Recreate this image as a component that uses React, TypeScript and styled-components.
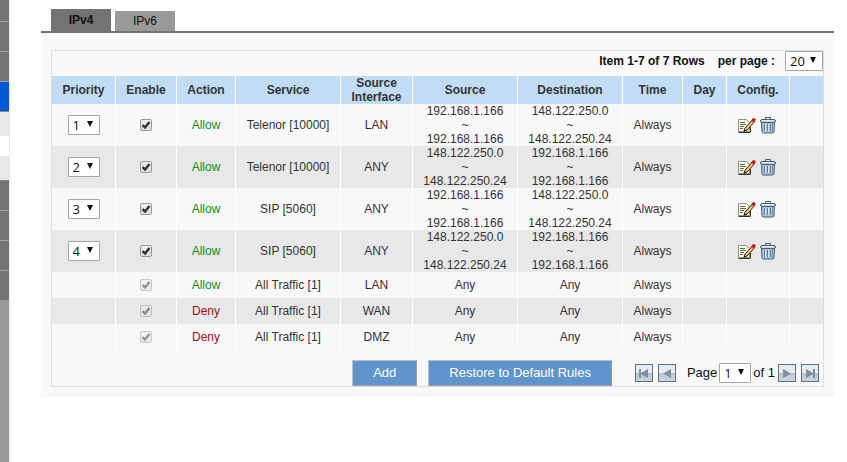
import React from "react";
import styled, { createGlobalStyle } from "styled-components";

const Global = createGlobalStyle`
  *, *::before, *::after { box-sizing: border-box; }
  body {
    margin: 0;
    background: #fff;
    color: #333;
    font: 12px/14px "Liberation Sans", Arial, sans-serif;
  }
`;

const Page = styled.div`
  display: flex;
  min-height: 100vh;
`;

const Sidebar = styled.nav`
  flex: none;
  display: flex;
  flex-direction: column;
  width: 10px;
  border-right: 1px solid #e8e8e8;
  background: #999;
`;

const SideItem = styled.div<{ $h: number; $tone: string; $line?: string }>`
  flex: none;
  height: ${(p) => p.$h}px;
  background: ${(p) => p.$tone};
  border-bottom: ${(p) => (p.$line ? `1px solid ${p.$line}` : "0")};
`;

const Main = styled.main`
  flex: 1;
  min-width: 0;
  padding: 9px 13px 0 31px;
`;

const Tabs = styled.div`
  display: flex;
  align-items: flex-end;
  gap: 4px;
  padding-left: 10px;
  border-bottom: 2px solid #737373;
`;

const Tab = styled.button<{ $active?: boolean }>`
  width: 60px;
  height: ${(p) => (p.$active ? 22 : 20)}px;
  padding: 0;
  border: 0;
  background: ${(p) => (p.$active ? "#737373" : "#999")};
  color: #111;
  font: inherit;
  font-weight: ${(p) => (p.$active ? 700 : 400)};
`;

const Panel = styled.section`
  padding: 17px 10px 10px;
  background: #f8f8f8;
`;

const Box = styled.div`
  border: 1px solid #ddd;
`;

const TopBar = styled.div`
  display: flex;
  justify-content: flex-end;
  gap: 13px;
  height: 25px;
  color: #111;
  font-weight: 700;
  line-height: 20px;
`;

const PerPage = styled.label`
  display: flex;
  gap: 10px;
`;

const Table = styled.table`
  width: 100%;
  table-layout: fixed;
  border-collapse: separate;
  border-spacing: 0;
  text-align: center;
`;

const Col = styled.col<{ $w: number }>`
  width: ${(p) => p.$w}px;
`;

const Th = styled.th`
  height: 28px;
  padding: 0;
  border-right: 1px solid #fff;
  background: #c2dcf5;
  &:last-child { border-right: 0; }
`;

const Td = styled.td`
  padding: 0;
  border-right: 1px solid #fff;
  vertical-align: middle;
  &:last-child { border-right: 0; }
`;

const Row = styled.tr<{ $tall: boolean }>`
  height: ${(p) => (p.$tall ? 42 : 26)}px;
  &:nth-child(even) { background: #e8e8e8; }
`;

const Verdict = styled.span<{ $deny: boolean }>`
  color: ${(p) => (p.$deny ? "#a01010" : "#0a8f1c")};
`;

const SelectWrap = styled.span<{ $w: number; $h: number }>`
  position: relative;
  display: inline-block;
  vertical-align: middle;
  width: ${(p) => p.$w}px;
  height: ${(p) => p.$h}px;
  svg {
    position: absolute;
    right: 7px;
    top: 6px;
    pointer-events: none;
  }
`;

const SelectBox = styled.select`
  display: block;
  appearance: none;
  width: 100%;
  height: 100%;
  padding: 0 0 0 4px;
  border: 1px solid #a6a6a6;
  border-radius: 1px;
  background: #fff;
  color: #111;
  font: 13px/16px "Open Sans", "Noto Sans", sans-serif;
`;

const CheckWrap = styled.span<{ $off: boolean }>`
  position: relative;
  display: block;
  width: 12px;
  height: 12px;
  margin: 0 auto;
  opacity: ${(p) => (p.$off ? 0.5 : 1)};
  svg {
    position: absolute;
    left: 1px;
    top: 1px;
    pointer-events: none;
  }
`;

const CheckBox = styled.input`
  display: block;
  appearance: none;
  width: 12px;
  height: 12px;
  margin: 0;
  border: 1px solid #999;
  border-radius: 2px;
  background: linear-gradient(#eee, #ddd);
`;

const Tools = styled.div`
  display: flex;
  justify-content: center;
  gap: 4px;
  padding-right: 2px;
`;

const IconButton = styled.button`
  display: block;
  padding: 0;
  border: 0;
  background: none;
  svg { display: block; }
`;

const Footer = styled.div`
  display: flex;
  justify-content: flex-end;
  flex-wrap: wrap;
  gap: 23px;
  padding: 10px 4px 0 0;
`;

const Actions = styled.div`
  display: flex;
  gap: 11px;
`;

const Action = styled.button`
  height: 26px;
  padding: 0 20px;
  border: 1px solid;
  border-color: #b5c1ce #a09a94 #a09a94 #b5c1ce;
  background: #6094cc;
  color: #fff;
  font: 13px/16px "Liberation Sans", Arial, sans-serif;
`;

const Pager = styled.div`
  display: flex;
  align-items: center;
  color: #111;
  font-size: 13px;
`;

const NavGroup = styled.div`
  display: flex;
  gap: 5px;
`;

const PageLabel = styled.label`
  display: flex;
  align-items: center;
  gap: 2px;
  padding: 0 3px 0 11px;
`;

const NavButton = styled.button`
  width: 18px;
  height: 18px;
  padding: 0;
  border: 1px solid #62717c;
  background: linear-gradient(#e6ecf2 0 50%, #b6c4d0 50%, #cbd6e0 100%);
  svg { display: block; }
`;

const Arrow = () => (
  <svg width="6" height="6" viewBox="0 0 6 6" aria-hidden="true">
    <path d="M0 0h6L3 6z" fill="#111" />
  </svg>
);

function Select({ label, value, w = 32, h = 20 }: { label: string; value: string; w?: number; h?: number }) {
  return (
    <SelectWrap $w={w} $h={h}>
      <SelectBox aria-label={label} defaultValue={value}>
        <option>{value}</option>
      </SelectBox>
      <Arrow />
    </SelectWrap>
  );
}

function Check({ label, disabled }: { label: string; disabled: boolean }) {
  return (
    <CheckWrap $off={disabled}>
      <CheckBox type="checkbox" defaultChecked disabled={disabled} aria-label={label} />
      <svg width="10" height="10" viewBox="0 0 10 10" aria-hidden="true">
        <path d="M1.5 5.2 4 7.5 8.5 2" fill="none" stroke="#333" strokeWidth="2.5" />
      </svg>
    </CheckWrap>
  );
}

const EditIcon = () => (
  <svg width="18" height="17" viewBox="0 0 18 17" aria-hidden="true">
    <path d="M.5 2.5h8l3 3v9H.5z" fill="#f7f8ea" stroke="#8f958b" />
    <path d="M.5 15.5h12M12.5 10v5" fill="none" stroke="#2f332d" />
    <path d="M2 5.5h5M2 7.5h6M2 9.5h4M2 11.5h3" stroke="#62683f" />
    <path d="m7 14.5 4-1.5-2-2z" fill="#f2e21d" />
    <path d="M7 11.2 14.8 2.4l2 2L9 13l-3 1.2z" fill="#e9ae67" stroke="#3a2414" />
    <path d="M8.5 12 14 5.7" stroke="#ffe3ab" />
    <path d="m13.2 3.3 2.4-2.6 2.4 1.8-2.5 3z" fill="#c41b16" />
    <path d="m5.6 14.6 1-2.2 1.4 1.3z" fill="#111" />
  </svg>
);

const TrashIcon = () => (
  <svg width="16" height="17" viewBox="0 0 16 17" aria-hidden="true">
    <path d="M5.5 2.5v-2h5v2" fill="none" stroke="#4a5d6b" />
    <path d="M1.5 5h13l-.5 9.5q-.1 1.5-1.5 1.5h-9Q2.100 16 2 14.500z" fill="#a9c4dc" stroke="#4a5d6b" />
    <path d="M4.500 7v7M7.500 7v7M10.500 7v7" stroke="#5b7d9f" />
    <path d="M5.500 7v7M8.500 7v7" stroke="#dbe8f3" />
    <path d="M12.500 6v9" stroke="#7795b0" />
    <rect x=".5" y="2.500" width="15" height="3" rx="1.500" fill="#c3d3df" stroke="#4a5d6b" />
    <path d="M2 3.500h11" stroke="#e6eef4" />
  </svg>
);

function NavIcon({ back, end }: { back?: boolean; end?: boolean }) {
  return (
    <svg width="16" height="16" viewBox="0 0 16 16" aria-hidden="true">
      <g fill="#7f8f9d" transform={back ? "matrix(-1 0 0 1 16 0)" : undefined}>
        <path d="M4 4v9l8-4.5z" />
        {end && <rect x="11" y="4" width="2" height="9" />}
      </g>
    </svg>
  );
}

const columns: [string, number][] = [
  ["Priority", 64],
  ["Enable", 61],
  ["Action", 59],
  ["Service", 105],
  ["Source Interface", 72],
  ["Source", 105],
  ["Destination", 105],
  ["Time", 60],
  ["Day", 44],
  ["Config.", 63],
  ["", 33],
];

const A = ["192.168.1.166", "192.168.1.166"];
const B = ["148.122.250.0", "148.122.250.24"];
const ANY = ["Any"];

type Rule = { action: string; service: string; iface: string; from: string[]; to: string[]; priority?: string };

const rules: Rule[] = [
  { priority: "1", action: "Allow", service: "Telenor [10000]", iface: "LAN", from: A, to: B },
  { priority: "2", action: "Allow", service: "Telenor [10000]", iface: "ANY", from: B, to: A },
  { priority: "3", action: "Allow", service: "SIP [5060]", iface: "ANY", from: A, to: B },
  { priority: "4", action: "Allow", service: "SIP [5060]", iface: "ANY", from: B, to: A },
  { action: "Allow", service: "All Traffic [1]", iface: "LAN", from: ANY, to: ANY },
  { action: "Deny", service: "All Traffic [1]", iface: "WAN", from: ANY, to: ANY },
  { action: "Deny", service: "All Traffic [1]", iface: "DMZ", from: ANY, to: ANY },
];

const Range = ({ ends }: { ends: string[] }) =>
  ends.length === 1 ? (
    <>{ends[0]}</>
  ) : (
    <>
      {ends[0]}
      <br />~<br />
      {ends[1]}
    </>
  );

const sideItems: [number, string, string?][] = [
  [22, "#737373", "#a3a3a3"],
  [30, "#737373", "#a3a3a3"],
  [30, "#737373", "#a3a3a3"],
  [30, "#005bd3", "#8a8a8a"],
  [24, "#e8e8e8"],
  [20, "#fff"],
  [25, "#e8e8e8", "#738a99"],
  [30, "#737373", "#a3a3a3"],
  [30, "#737373", "#a3a3a3"],
  [30, "#737373", "#a3a3a3"],
  [29, "#737373"],
];

export default function App() {
  return (
    <Page>
      <Global />
      <Sidebar>
        {sideItems.map(([h, tone, line], i) => (
          <SideItem key={i} $h={h} $tone={tone} $line={line} />
        ))}
      </Sidebar>
      <Main>
        <Tabs role="tablist">
          <Tab role="tab" aria-selected="true" $active>IPv4</Tab>
          <Tab role="tab" aria-selected="false">IPv6</Tab>
        </Tabs>
        <Panel>
          <Box>
            <TopBar>
              <span>Item 1-7 of 7 Rows</span>
              <PerPage>
                per page :
                <Select label="Rows per page" value="20" w={38} />
              </PerPage>
            </TopBar>
            <Table>
              <colgroup>
                {columns.map(([, w], i) => (
                  <Col key={i} $w={w} />
                ))}
              </colgroup>
              <thead>
                <tr>
                  {columns.map(([name], i) => (
                    <Th key={i}>{name}</Th>
                  ))}
                </tr>
              </thead>
              <tbody>
                {rules.map((r, i) => (
                  <Row key={i} $tall={!!r.priority}>
                    <Td>{r.priority && <Select label={`Priority of rule ${i + 1}`} value={r.priority} />}</Td>
                    <Td><Check label={`Enable rule ${i + 1}`} disabled={!r.priority} /></Td>
                    <Td><Verdict $deny={r.action === "Deny"}>{r.action}</Verdict></Td>
                    <Td>{r.service}</Td>
                    <Td>{r.iface}</Td>
                    <Td><Range ends={r.from} /></Td>
                    <Td><Range ends={r.to} /></Td>
                    <Td>Always</Td>
                    <Td />
                    <Td>
                      {r.priority && (
                        <Tools>
                          <IconButton aria-label="Edit"><EditIcon /></IconButton>
                          <IconButton aria-label="Delete"><TrashIcon /></IconButton>
                        </Tools>
                      )}
                    </Td>
                    <Td />
                  </Row>
                ))}
              </tbody>
            </Table>
            <Footer>
              <Actions>
                <Action>Add</Action>
                <Action>Restore to Default Rules</Action>
              </Actions>
              <Pager>
                <NavGroup>
                  <NavButton aria-label="First page"><NavIcon back end /></NavButton>
                  <NavButton aria-label="Previous page"><NavIcon back /></NavButton>
                </NavGroup>
                <PageLabel>
                  Page
                  <Select label="Page" value="1" />
                  of 1
                </PageLabel>
                <NavGroup>
                  <NavButton aria-label="Next page"><NavIcon /></NavButton>
                  <NavButton aria-label="Last page"><NavIcon end /></NavButton>
                </NavGroup>
              </Pager>
            </Footer>
          </Box>
        </Panel>
      </Main>
    </Page>
  );
}
